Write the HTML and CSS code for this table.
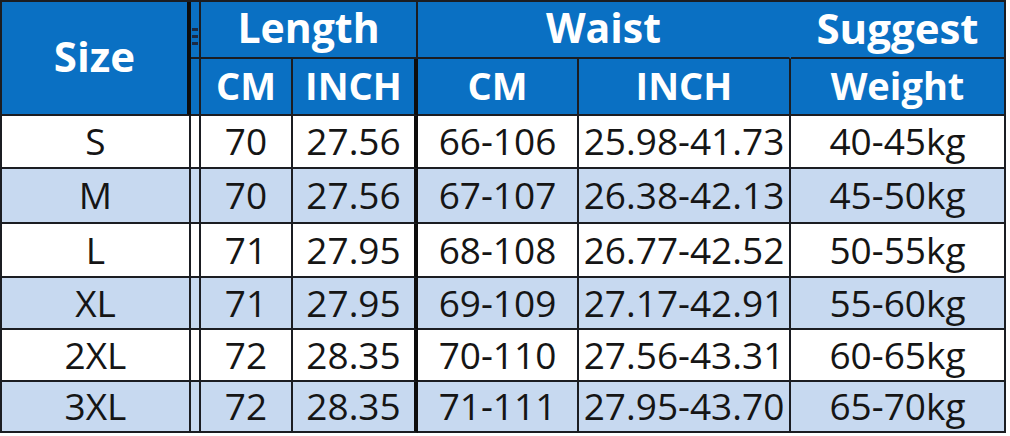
FILE: index.html
```html
<!DOCTYPE html>
<html lang="en">
<head>
<meta charset="utf-8">
<title>Size Chart</title>
<link rel="stylesheet" href="styles.css">
</head>
<body>
<div class="chart">
  <div class="c hd size">Size</div>
  <div class="c hd gap gap-top"></div>
  <div class="c hd group len">Length</div>
  <div class="c hd group waist">Waist</div>
  <div class="c hd group sug">Suggest</div>

  <div class="c hd gap"></div>
  <div class="c hd sub">CM</div>
  <div class="c hd sub">INCH</div>
  <div class="c hd sub">CM</div>
  <div class="c hd sub">INCH</div>
  <div class="c hd sub">Weight</div>

  <div class="c">S</div><div class="c gap"></div><div class="c">70</div><div class="c">27.56</div><div class="c">66-106</div><div class="c">25.98-41.73</div><div class="c">40-45kg</div>
  <div class="c alt">M</div><div class="c alt gap"></div><div class="c alt">70</div><div class="c alt">27.56</div><div class="c alt">67-107</div><div class="c alt">26.38-42.13</div><div class="c alt">45-50kg</div>
  <div class="c">L</div><div class="c gap"></div><div class="c">71</div><div class="c">27.95</div><div class="c">68-108</div><div class="c">26.77-42.52</div><div class="c">50-55kg</div>
  <div class="c alt">XL</div><div class="c alt gap"></div><div class="c alt">71</div><div class="c alt">27.95</div><div class="c alt">69-109</div><div class="c alt">27.17-42.91</div><div class="c alt">55-60kg</div>
  <div class="c">2XL</div><div class="c gap"></div><div class="c">72</div><div class="c">28.35</div><div class="c">70-110</div><div class="c">27.56-43.31</div><div class="c">60-65kg</div>
  <div class="c alt">3XL</div><div class="c alt gap"></div><div class="c alt">72</div><div class="c alt">28.35</div><div class="c alt">71-111</div><div class="c alt">27.95-43.70</div><div class="c alt">65-70kg</div>
</div>
</body>
</html>
```
FILE: styles.css
```css
html, body {
  margin: 0;
  padding: 0;
  background: #ffffff;
}

.chart {
  display: grid;
  grid-template-columns: 189px 10px 92px 125px 161px 212px 215px;
  grid-template-rows: 57px 57px 53px 55px 54px 52px 52px 51px;
  width: 1006px;
  box-sizing: border-box;
  border-top: 2px solid #1b1d22;
  border-left: 2px solid #1b1d22;
  font-family: "Open Sans", "Noto Sans", sans-serif;
  color: #151515;
}

.c {
  box-sizing: border-box;
  border-right: 2px solid #1b1d22;
  border-bottom: 2px solid #1b1d22;
  display: flex;
  align-items: center;
  justify-content: center;
  font-size: 37px;
  line-height: 1.25;
  white-space: nowrap;
  background: #ffffff;
}

.c.alt {
  background: #c7d9f0;
}

.c:nth-child(7n+1) {
  border-right-width: 4px;
  border-right-color: #0d0d0d;
}

.hd {
  background: #0a70c3;
  color: #ffffff;
  font-weight: 700;
  font-size: 38px;
}

.hd.size {
  grid-row: 1 / 3;
  grid-column: 1;
  border-right: 4px solid #0d0d0d;
  padding-bottom: 4px;
  font-size: 42px;
}

.c.gap {
  grid-column: 2;
}

.hd.gap-top {
  background-color: #0a70c3;
  background-image:
    linear-gradient(#1b2a44, #1b2a44),
    linear-gradient(#1b2a44, #1b2a44),
    linear-gradient(#1b2a44, #1b2a44);
  background-size: 6px 3px, 6px 3px, 6px 3px;
  background-position: 1px 26px, 1px 33px, 1px 40px;
  background-repeat: no-repeat;
}

.group {
  padding-bottom: 3px;
  font-size: 41px;
  line-height: 1.2;
}

.len {
  grid-column: 3 / 5;
}

.waist {
  grid-column: 5 / 7;
  border-right-color: #0a70c3;
}

.sug {
  grid-column: 7;
  font-size: 42px;
}

.sub {
  padding-bottom: 2px;
}
```
